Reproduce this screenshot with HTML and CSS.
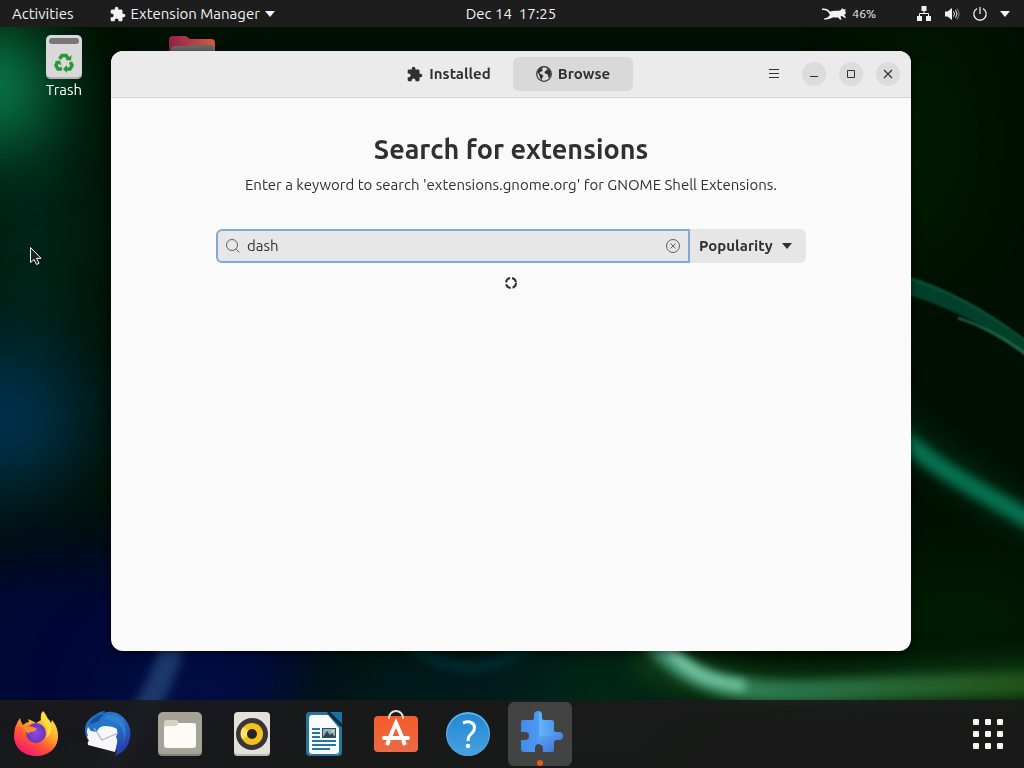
FILE: index.html
```html
<!DOCTYPE html>
<html lang="en">
<head>
  <meta charset="UTF-8" />
  <meta name="viewport" content="width=device-width, initial-scale=1.0" />
  <title>Extension Manager</title>
  <link rel="stylesheet" href="styles.css">
</head>
<body>
  <!-- wallpaper -->
  <svg class="wallpaper" viewBox="0 0 1024 768" preserveAspectRatio="xMidYMid slice" aria-hidden="true">
    <defs>
      <filter id="soft" filterUnits="userSpaceOnUse" x="-300" y="-300" width="1624" height="1368"><feGaussianBlur stdDeviation="38"/></filter>
      <filter id="mid" filterUnits="userSpaceOnUse" x="-100" y="-100" width="1224" height="968"><feGaussianBlur stdDeviation="12"/></filter>
      <filter id="fine" filterUnits="userSpaceOnUse" x="-100" y="-100" width="1224" height="968"><feGaussianBlur stdDeviation="5"/></filter>
      <filter id="edge" filterUnits="userSpaceOnUse" x="-100" y="-100" width="1224" height="968"><feGaussianBlur stdDeviation="1"/></filter>
      <linearGradient id="ribbon" gradientUnits="userSpaceOnUse" x1="640" y1="0" x2="1024" y2="0">
        <stop offset="0" stop-color="#3f9070"/>
        <stop offset=".4" stop-color="#2a7448"/>
        <stop offset="1" stop-color="#225218"/>
      </linearGradient>
    </defs>
    <rect width="1024" height="768" fill="#001002"/>
    <ellipse cx="30" cy="230" rx="60" ry="150" fill="#00261a" filter="url(#soft)"/>
    <ellipse cx="-10" cy="85" rx="60" ry="60" fill="#0a8a55" filter="url(#soft)"/>
    <ellipse cx="0" cy="420" rx="90" ry="80" fill="#00304a" filter="url(#soft)"/>
    <ellipse cx="90" cy="660" rx="230" ry="110" fill="#000838" filter="url(#soft)"/>
    <ellipse cx="200" cy="700" rx="90" ry="50" fill="#001048" filter="url(#soft)"/>
    <ellipse cx="480" cy="700" rx="180" ry="60" fill="#001c20" filter="url(#soft)"/>
    <ellipse cx="610" cy="700" rx="80" ry="60" fill="#002a18" filter="url(#soft)"/>
    <ellipse cx="920" cy="140" rx="40" ry="120" fill="#001e02" filter="url(#soft)"/>
    <ellipse cx="960" cy="620" rx="120" ry="60" fill="#001c04" filter="url(#soft)"/>
    <path d="M174 640C164 680 150 705 108 768" fill="none" stroke="#2f5486" stroke-width="24" opacity=".6" filter="url(#fine)"/>
    <path d="M410 645Q470 690 530 645" fill="none" stroke="#01404a" stroke-width="10" opacity=".5" filter="url(#fine)"/>
    <path d="M890 271C945 285 990 312 1040 352V368C995 330 950 305 890 290Z" fill="#03402b" filter="url(#edge)"/>
    <path d="M890 273C945 287 990 312 1040 352" fill="none" stroke="#0b553a" stroke-width="2" filter="url(#edge)"/>
    <path d="M958 318Q990 328 1026 354" fill="none" stroke="#2b7558" stroke-width="2" filter="url(#edge)"/>
    <path d="M880 410C935 465 980 490 1040 526" fill="none" stroke="#003018" stroke-width="40" opacity=".6" filter="url(#mid)"/>
    <path d="M885 420C925 465 975 487 1040 526" fill="none" stroke="#067050" stroke-width="18" filter="url(#fine)"/>
    <path d="M640 650C720 710 850 690 1060 680" fill="none" stroke="#0d3c16" stroke-width="44" filter="url(#mid)"/>
    <path d="M640 620C680 690 740 695 840 690S980 685 1060 683" fill="none" stroke="url(#ribbon)" stroke-width="22" filter="url(#fine)"/>
    <path d="M655 630C680 670 705 682 745 686" fill="none" stroke="#7ccaa9" stroke-width="10" filter="url(#fine)"/>
  </svg>

  <!-- shared puzzle piece -->
  <svg width="0" height="0" class="sprite" aria-hidden="true">
    <symbol id="puzzle" viewBox="1 0 23 23">
      <path d="M20.500 11H19V7c0-1.100-.9-2-2-2h-4V3.500C13 2.120 11.880 1 10.500 1S8 2.120 8 3.500V5H4c-1.100 0-1.990.9-1.990 2v3.800H3.500c1.490 0 2.700 1.210 2.700 2.700s-1.210 2.700-2.700 2.700H2V20c0 1.100.9 2 2 2h3.800v-1.500c0-1.490 1.210-2.700 2.700-2.700 1.490 0 2.700 1.210 2.700 2.700V22H17c1.100 0 2-.9 2-2v-4h1.500c1.380 0 2.500-1.120 2.500-2.500S21.880 11 20.500 11z"/>
    </symbol>
  </svg>

  <header class="topbar">
    <div class="topbar-left">
      <button class="bar-btn">Activities</button>
      <button class="bar-btn app-menu">
        <svg class="icon" width="16" height="16"><use href="#puzzle"/></svg>
        Extension Manager
        <svg class="icon" width="10" height="6" viewBox="0 0 10 6"><path d="M0 0h10L5 6z"/></svg>
      </button>
    </div>
    <button class="bar-btn">Dec 14&nbsp; 17:25</button>
    <div class="topbar-right">
      <button class="bar-btn cpu">
        <svg class="icon" width="26" height="14" viewBox="0 0 26 14">
          <path d="M1 1.500C5 1 7 2 9 4.500c3-1 6-.8 9-.7L20 3l1-2 1.500 1.500L24.500 2l-.3 2.500 1 1.500-2 1.700 1.800 3-1.200.3L21 9l-1.500.5 1 3-1.300.3L17 10.500c-2 .2-3 .2-4.500-.3L8 12l-4.500.7L3 11.500l3.500-1L9 8 7.500 5.500C6 3.600 4 3 1 3z"/>
        </svg>
        46%
      </button>
      <button class="bar-btn system" aria-label="System menu">
        <svg class="icon" width="16" height="16" viewBox="0 0 16 16">
          <path d="M5.500 0h5v5h-5zM1 10h5v5H1zM10 10h5v5h-5z"/>
          <path d="M8 5v2.500M3.500 10V7.500h9V10" fill="none" stroke="#f2f2f2"/>
        </svg>
        <svg class="icon" width="16" height="16" viewBox="0 0 16 16">
          <path d="M1 5.500h2.500L8 2v12l-4.500-3.500H1z"/>
          <path d="M9.500 5.500q2 2.500 0 5M11.500 4q3 4 0 8" fill="none" stroke="#f2f2f2"/>
          <path d="M13 2.500q4 5.500 0 11" fill="none" stroke="#8a8a8a"/>
        </svg>
        <svg class="icon" width="16" height="16" viewBox="0 0 16 16">
          <path d="M5 2.600a6.200 6.200 0 1 0 6 0M8 1v7" fill="none" stroke="#e8e8e8" stroke-width="1.300"/>
        </svg>
        <svg class="icon" width="10" height="6" viewBox="0 0 10 6"><path d="M0 0h10L5 6z"/></svg>
      </button>
    </div>
  </header>

  <main class="desktop">
    <div class="desk-item trash">
      <svg width="38" height="46" viewBox="0 0 38 46">
        <rect x="1" y="1" width="36" height="44" rx="5" fill="#d9d9d9"/>
        <path d="M1 38v2a5 5 0 0 0 5 5h26a5 5 0 0 0 5-5v-2a5 5 0 0 1-5 5H6a5 5 0 0 1-5-5z" fill="#b4b4b4"/>
        <rect x="4" y="4" width="30" height="6" rx="3" fill="#777"/>
        <g fill="none" stroke="#289a33" stroke-width="3.500">
          <path d="M14.500 25l2.500-3.500h4l2.500 3.500"/>
          <path d="M25.500 28l1.500 3.500-2 3.500h-4"/>
          <path d="M17 35h-4l-2-3.500 1.500-3.500"/>
        </g>
        <path d="M20.500 26l5.500.5.500-5.500zM22 31l-4 4 4 4zM10 27l5-.5 1.500 5z" fill="#289a33"/>
      </svg>
      <span>Trash</span>
    </div>
    <div class="desk-item folder">
      <svg width="46" height="38" viewBox="0 0 46 38">
        <defs><linearGradient id="fold"><stop offset="0" stop-color="#92224b"/><stop offset="1" stop-color="#d65b3c"/></linearGradient></defs>
        <path d="M0 4q0-4 4-4h13l4 3h21q4 0 4 4v31H0z" fill="url(#fold)"/>
        <path d="M2 14q0-4 4-4h13l3-1h20q3 0 3 3v26H2z" fill="#686c6a"/>
      </svg>
    </div>

    <section class="window">
      <div class="headerbar">
        <nav class="tabs">
          <button class="tab"><svg width="16" height="16"><use href="#puzzle"/></svg>Installed</button>
          <button class="tab active">
            <svg width="16" height="16" viewBox="0 0 16 16">
              <circle cx="8" cy="8" r="7.300" fill="none" stroke="#303030" stroke-width="1.200"/>
              <path d="M1.500 6L3 3l3-2 1 1-1.500 1L7 4 5.500 5.500 4 6l-.5 1.500L6 8.500l1.500 1.500L6 12l-.5 2.500L4 12l-.5-2.500zM10 1.500l3.500 2.500 1.500 4-1.500 3.500-1 .5-.5-2.500-.8-1.500L9 7.500 8.500 6 10 4.500l1.500-.5z"/>
            </svg>Browse
          </button>
        </nav>
        <div class="controls">
          <button class="menu-btn" aria-label="Menu">
            <svg width="12" height="12" viewBox="0 0 12 12"><path d="M1 1.500h10M1 5.500h10M1 9.500h10"/></svg>
          </button>
          <button class="win-btn" aria-label="Minimize"><svg width="10" height="10" viewBox="0 0 10 10"><path d="M1 7.500h8"/></svg></button>
          <button class="win-btn" aria-label="Maximize"><svg width="10" height="10" viewBox="0 0 10 10"><path d="M1.500 1.500h7v7h-7z"/></svg></button>
          <button class="win-btn" aria-label="Close"><svg width="10" height="10" viewBox="0 0 10 10"><path d="M1 1l8 8M9 1L1 9" stroke-width="1.200"/></svg></button>
        </div>
      </div>

      <div class="content">
        <h1>Search for extensions</h1>
        <p>Enter a keyword to search 'extensions.gnome.org' for GNOME Shell Extensions.</p>
        <form class="search-row">
          <div class="search-box">
            <svg width="16" height="16" viewBox="0 0 16 16"><circle cx="7" cy="7" r="5.500"/><path d="M11 11l3.500 3.500"/></svg>
            <input type="text" value="dash" aria-label="Search">
            <button type="button" class="clear" aria-label="Clear">
              <svg width="16" height="16" viewBox="0 0 16 16"><circle cx="8" cy="8" r="6.500"/><path d="M5.500 5.500l5 5M10.500 5.500l-5 5"/></svg>
            </button>
          </div>
          <div class="sort">
            <select aria-label="Sort by">
              <option>Popularity</option>
              <option>Downloads</option>
              <option>Recent</option>
              <option>Name</option>
            </select>
            <svg class="caret" width="10" height="6" viewBox="0 0 10 6"><path d="M0 0h10L5 6z"/></svg>
          </div>
        </form>
        <svg class="spinner" width="12" height="12" viewBox="0 0 12 12" role="img" aria-label="Loading">
          <circle cx="6" cy="6" r="5"/>
        </svg>
      </div>
    </section>

    <svg class="cursor" width="14" height="20" viewBox="0 0 14 20" aria-hidden="true">
      <path d="M1.500 1.500v15l3.500-3 2.500 5 2.500-1.200-2.500-5H12z"/>
    </svg>
  </main>

  <footer class="dock">
    <button class="dock-item" aria-label="Firefox">
      <svg width="48" height="48" viewBox="0 0 48 48">
        <defs>
          <linearGradient id="fx" x1=".85" y1=".1" x2=".3" y2="1">
            <stop offset="0" stop-color="#ffe63f"/><stop offset=".35" stop-color="#ffb02b"/>
            <stop offset=".65" stop-color="#ff5535"/><stop offset="1" stop-color="#f0186e"/>
          </linearGradient>
          <radialGradient id="fxp"><stop offset="0" stop-color="#8a4be8"/><stop offset="1" stop-color="#6a35b8"/></radialGradient>
        </defs>
        <path d="M8 8q1 5 3 7 3-3 6-3l-1-3q5 2 8 4l5-3Q28 5 31 1q4 4 5 10l3 2 1-3q6 7 6 16c0 12-9 20-22 20S2 37 2 26q0-10 6-18z" fill="url(#fx)"/>
        <circle cx="24" cy="23" r="10" fill="url(#fxp)"/>
        <path d="M12 18q6-4 13 1-2 3-6 3-2 0-3 2z" fill="#ff8a32"/>
        <path d="M30 2q-3 6 2 11 6 7 2 15 9-7 4-17z" fill="#ffdd3c"/>
      </svg>
    </button>
    <button class="dock-item" aria-label="Thunderbird">
      <svg width="48" height="48" viewBox="0 0 48 48">
        <defs><linearGradient id="tb" x1="0" y1="0" x2=".8" y2="1"><stop offset="0" stop-color="#1b6fc8"/><stop offset=".5" stop-color="#2877c9"/><stop offset="1" stop-color="#2636a8"/></linearGradient></defs>
        <path d="M11 5q5-4 11-4-3 1-3 2 12-4 21 5 8 9 6 20-2 13-15 18l2-6-28-9Q-1 23 2 14q3-6 9-9z" fill="url(#tb)"/>
        <path d="M24 5Q38 5 41 17q2 11-4 19 7-11-2-21-6-5-16-6z" fill="#2f80d0"/>
        <path d="M5 15q4-8 10-10l5-1q-4 3-5 7z" fill="#174f9f"/>
        <path d="M13 22q1-5 7-6 9 0 13 3 1 4-1 8 2 3 1 6-1 5-2 9L4 35q-1-2 1-5-3-2-1-5-2-3 0-8l3 4z" fill="#f7f7fa"/>
        <path d="M10 18l8 12 16-7" fill="none" stroke="#a9b3c4" stroke-width="1.200"/>
      </svg>
    </button>
    <button class="dock-item" aria-label="Files">
      <svg width="48" height="48" viewBox="0 0 48 48">
        <rect x="2" y="2" width="44" height="44" rx="5" fill="#a5a296"/>
        <path d="M2 40q0 4 5 4h34q5 0 5-4v2q0 4-5 4H7q-5 0-5-4z" fill="#87857b"/>
        <path d="M8 35V13q0-3 3-3h9q2 0 3 3h14q3 0 3 3v20z" fill="#d5d1c4"/>
        <path d="M8 18q0-2 3-2h9l3-3h14q3 0 3 3v19q0 3-3 3H11q-3 0-3-3z" fill="#fcfaf5"/>
      </svg>
    </button>
    <button class="dock-item" aria-label="Rhythmbox">
      <svg width="48" height="48" viewBox="0 0 48 48">
        <rect x="6" y="2" width="36" height="44" rx="4" fill="#e3e1da"/>
        <path d="M6 40q0 4 4 4h28q4 0 4-4v2q0 4-4 4H10q-4 0-4-4z" fill="#bdbbb3"/>
        <circle cx="24" cy="24" r="16" fill="#38363a"/>
        <circle cx="24" cy="24" r="11" fill="#f5c21b"/>
        <path d="M24 24L15 17a11 11 0 0 0-1 12z" fill="#ffe16b"/>
        <circle cx="24" cy="24" r="5" fill="#252426"/>
      </svg>
    </button>
    <button class="dock-item" aria-label="LibreOffice Writer">
      <svg width="48" height="48" viewBox="0 0 48 48">
        <path d="M9 2h20l13 13v27q0 4-4 4H10q-4 0-4-4V6q0-4 3-4z" fill="#25759e"/>
        <path d="M11 5h17l11 13v23q0 3-3 3H12q-3 0-3-3V7z" fill="#f8fbfc"/>
        <path d="M29 2h13v14z" fill="#1870a4"/>
        <path d="M28 2l14 14" stroke="#102839" stroke-width="3"/>
        <path d="M12 19h8M12 23h8M12 27h8M12 31h24M12 35h24M12 39h18" stroke="#2574a3" stroke-width="2"/>
        <rect x="22" y="18" width="14" height="10" fill="#2e4e60"/>
        <rect x="23" y="19" width="12" height="8" fill="#83b5cb"/>
        <path d="M23 27l4-6 3 4 2-2 3 4z" fill="#3a4543"/>
        <circle cx="33" cy="21" r="1.500" fill="#f3cc45"/>
      </svg>
    </button>
    <button class="dock-item" aria-label="Software">
      <svg width="48" height="48" viewBox="0 0 48 48">
        <defs><linearGradient id="bag" x1="0" y1="0" x2="0" y2="1"><stop offset="0" stop-color="#f45c27"/><stop offset="1" stop-color="#e96b48"/></linearGradient></defs>
        <rect x="2" y="6" width="44" height="36" rx="4" fill="url(#bag)"/>
        <path d="M17 9V8a7 7 0 0 1 14 0v1" fill="none" stroke="#e9ded2" stroke-width="2"/>
        <path d="M15 35l2-5M33 35l-2-5M18 27l6-14 6 14" fill="none" stroke="#fff" stroke-width="4"/>
        <path d="M12 28h24" stroke="#fff" stroke-width="4" stroke-linecap="round"/>
      </svg>
    </button>
    <button class="dock-item" aria-label="Help">
      <svg width="48" height="48" viewBox="0 0 48 48">
        <defs><linearGradient id="hlp" x1="0" y1="0" x2="0" y2="1"><stop offset="0" stop-color="#2387d2"/><stop offset="1" stop-color="#48a3df"/></linearGradient></defs>
        <circle cx="24" cy="24" r="22" fill="#5bb5eb"/>
        <circle cx="24" cy="25" r="21" fill="url(#hlp)"/>
        <path d="M19 13q5-2 8-.5c5 2 4 8 1 10.500-3 3-4 4-4 8" fill="none" stroke="#fff" stroke-width="3"/>
        <circle cx="24" cy="36" r="2.200" fill="#fff"/>
      </svg>
    </button>
    <button class="dock-item running" aria-label="Extension Manager">
      <svg width="48" height="48" viewBox="0 0 48 48">
        <defs>
          <linearGradient id="pz"><stop offset="0" stop-color="#438bea"/><stop offset=".43" stop-color="#4c9af2"/><stop offset=".44" stop-color="#62b3fa"/><stop offset="1" stop-color="#4689e5"/></linearGradient>
          <linearGradient id="pz2" x1="1" y1="1" x2="0" y2="0"><stop offset="0" stop-color="#3c70d4"/><stop offset="1" stop-color="#5da4f5"/></linearGradient>
        </defs>
        <path d="M7 10h9q2 0 2-2V5a4 4 0 0 1 8 0v3q0 2 2 2h7q3 0 3 3v7q0 2 2 2h3a4 4 0 0 1 0 8h-3q-2 0-2 2v7q0 3-3 3h-8v-4a4 4 0 0 0-8 0v4H8q-3 0-3-3v-9h4a4 4 0 0 0 0-8H5v-9q0-3 2-3z" fill="url(#pz)"/>
        <path d="M22 26h24q-1 4-3 4h-3q-2 0-2 2v7q0 3-3 3h-8v-4q-1-4-5-4z" fill="url(#pz2)"/>
      </svg>
    </button>
    <button class="dock-item apps" aria-label="Show Applications">
      <svg width="32" height="32" viewBox="0 0 32 32" fill="#f4f4f0">
        <rect x="1" y="1" width="6" height="6" rx="1"/><rect x="13" y="1" width="6" height="6" rx="1"/><rect x="25" y="1" width="6" height="6" rx="1"/>
        <rect x="1" y="13" width="6" height="6" rx="1"/><rect x="13" y="13" width="6" height="6" rx="1"/><rect x="25" y="13" width="6" height="6" rx="1"/>
        <rect x="1" y="25" width="6" height="6" rx="1"/><rect x="13" y="25" width="6" height="6" rx="1"/><rect x="25" y="25" width="6" height="6" rx="1"/>
      </svg>
    </button>
  </footer>
</body>
</html>
```
FILE: styles.css
```css
* {
  box-sizing: border-box;
}
body {
  margin: 0;
  min-height: 100vh;
  display: flex;
  flex-direction: column;
  background: #001002;
  color: #303030;
  font-family: Ubuntu, "Noto Sans", sans-serif;
  font-size: 15px;
  line-height: 20px;
}
button {
  border: none;
  padding: 0;
  background: none;
  color: inherit;
  font: inherit;
}
svg {
  display: block;
  flex: none;
}
.wallpaper {
  position: fixed;
  top: 0;
  left: 0;
  width: 100%;
  height: 100%;
  z-index: -1;
}
.wallpaper feGaussianBlur {
  color-interpolation-filters: sRGB;
}
.sprite {
  position: absolute;
}

/* top bar */
.topbar {
  display: grid;
  grid-template-columns: 1fr auto 1fr;
  align-items: center;
  height: 27px;
  padding: 0 14px 0 12px;
  background: #1d1d1d;
  color: #f2f2f2;
}
.topbar-left,
.topbar-right {
  display: flex;
  align-items: center;
}
.topbar-left {
  gap: 36px;
}
.topbar-right {
  justify-content: flex-end;
  gap: 40px;
}
.bar-btn {
  display: flex;
  align-items: center;
  white-space: nowrap;
}
.app-menu {
  gap: 5px;
}
.cpu {
  gap: 5px;
  font-size: 12px;
}
.system {
  gap: 12px;
}
.icon {
  fill: #f2f2f2;
}

/* desktop */
.desktop {
  position: relative;
  flex: 1;
  display: flex;
  padding: 24px 113px 49px 111px;
}
.desk-item {
  position: absolute;
  display: flex;
  flex-direction: column;
  align-items: center;
  color: #fff;
}
.trash {
  top: 7px;
  left: 45px;
}
.folder {
  top: 9px;
  left: 169px;
}
.cursor {
  position: absolute;
  top: 219px;
  left: 29px;
  fill: #222;
  stroke: #fff;
}

/* window */
.window {
  position: relative;
  flex: 1;
  border-radius: 12px;
  background: #fafafa;
  box-shadow: 0 2px 10px rgba(0,0,0,0.6);
  overflow: hidden;
}
.headerbar {
  display: grid;
  grid-template-columns: 1fr auto 1fr;
  align-items: center;
  height: 47px;
  padding: 0 11px;
  background: #ebebeb;
  border-bottom: 1px solid #d5d5d5;
}
.tabs {
  grid-column: 2;
  display: flex;
  gap: 4px;
}
.tab {
  display: flex;
  align-items: center;
  justify-content: center;
  gap: 6px;
  width: 120px;
  height: 34px;
  border-radius: 6px;
  font-weight: bold;
}
.tab svg {
  fill: #303030;
}
.tab.active {
  background: #d9d9d9;
}
.controls {
  display: flex;
  align-items: center;
  justify-content: flex-end;
  gap: 13px;
}
.controls svg {
  fill: none;
  stroke: #303030;
}
.menu-btn,
.win-btn {
  display: flex;
  align-items: center;
  justify-content: center;
  height: 24px;
}
.menu-btn {
  width: 30px;
}
.win-btn {
  width: 24px;
  border-radius: 50%;
  background: #dcdcdc;
}
.content {
  display: flex;
  flex-direction: column;
  align-items: center;
  padding: 33px 24px;
}
h1 {
  margin: 0;
  font-size: 27px;
  line-height: 36px;
}
p {
  margin: 8px 0 34px;
}
.search-row {
  display: flex;
  width: 100%;
  max-width: 590px;
  height: 34px;
}
.search-box {
  flex: 1;
  display: flex;
  align-items: center;
  gap: 6px;
  padding: 0 7px;
  background: #e7e7e7;
  border: 2px solid #83a9d3;
  border-radius: 6px 0 0 6px;
}
.search-box svg {
  fill: none;
  stroke: #606060;
}
.search-box input {
  flex: 1;
  min-width: 0;
  padding: 0;
  border: none;
  outline: none;
  background: none;
  color: inherit;
  font: inherit;
}
.sort {
  position: relative;
  width: 116px;
}
.sort select {
  appearance: none;
  width: 100%;
  height: 100%;
  padding: 0 9px;
  border: none;
  border-radius: 0 6px 6px 0;
  background: #e6e6e6;
  color: inherit;
  font: inherit;
  font-weight: bold;
}
.caret {
  position: absolute;
  top: 14px;
  right: 14px;
  fill: #303030;
  pointer-events: none;
}
.spinner {
  margin-top: 14px;
  fill: none;
  stroke: #303030;
  stroke-width: 2;
  stroke-dasharray: 6 2;
}

/* dock */
.dock {
  display: flex;
  gap: 8px;
  padding: 2px 4px;
  background: rgba(27,27,27,0.9);
}
.dock-item {
  position: relative;
  display: flex;
  align-items: center;
  justify-content: center;
  width: 64px;
  height: 64px;
  border-radius: 6px;
}
.running {
  background: #414443;
}
.running::after {
  content: "";
  position: absolute;
  bottom: 0;
  left: 29px;
  width: 6px;
  height: 6px;
  border-radius: 50%;
  background: #e95420;
}
.apps {
  margin-left: auto;
}
```
